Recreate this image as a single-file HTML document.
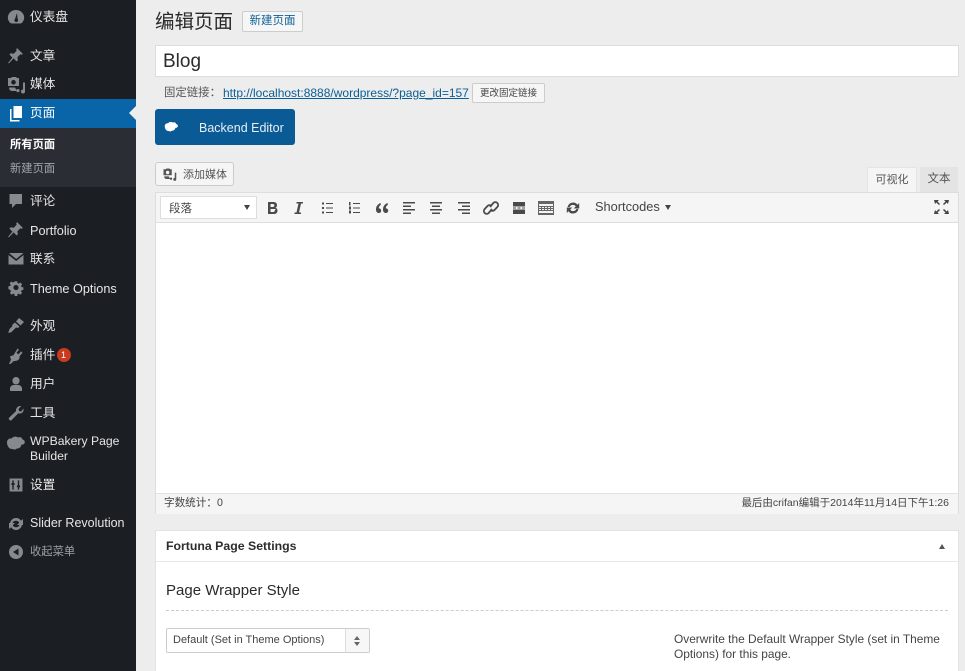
<!DOCTYPE html>
<html lang="zh"><head><meta charset="utf-8"><title>编辑页面</title>
<style>
html,body{margin:0;padding:0;width:965px;height:671px;overflow:hidden;background:#ededed}
body{font-family:"Liberation Sans","Noto Sans CJK SC",sans-serif;color:#333;position:relative}
#w{position:absolute;left:0;top:0;width:965px;height:671px;filter:blur(.35px)}
.a{position:absolute;white-space:nowrap}
#side{position:absolute;left:0;top:0;width:136px;height:671px;background:#1b1e23}
.m{position:absolute;left:30px;font-size:12.7px;line-height:18px;color:#e6e6e6;white-space:nowrap}
.i{position:absolute;left:6px;width:20px;height:20px;fill:#868a8f}
.t{position:absolute;top:199px;width:22px;height:18px;fill:#4a4a4a}
.t path.s{fill:none;stroke:#4a4a4a;stroke-width:1.8}
</style></head><body><div id="w">
<div id="side">
<div class="a" style="left:0;top:99px;width:136px;height:29px;background:#0a65a8"></div>
<div class="a" style="left:129px;top:106px;border:7.5px solid transparent;border-right-color:#ededed;border-left:0"></div>
<div class="a" style="left:0;top:128px;width:136px;height:59px;background:#2a2d33"></div>

<svg class="i" style="top:7px" viewBox="0 0 20 20"><path fill-rule="evenodd" d="M10 3a8 7.600 0 0 0-7 11.500c1 1.600 2 2 3 2h8c1 0 2-.4 3-2A8 7.600 0 0 0 10 3zM9 12l2-6 .6 6a1.800 1.800 0 1 1-2.600 0z"/></svg>
<div class="m" style="top:8px">仪表盘</div>
<svg class="i" style="top:45px" viewBox="0 0 20 20"><path d="M11 3l6 6-1.600.8-1-.6-3 3 .5 3-1.400 1.200-2.900-3-4.600 4.800-1-.2 4.400-5.400-3-3 1.300-1.300 3 .5 3-3-.5-1z"/></svg>
<div class="m" style="top:47px">文章</div>
<svg class="i" style="top:75px" viewBox="0 0 20 20"><path fill-rule="evenodd" d="M2 3h3l1-1h4l1 1h2v8H2zM7.500 5a2.300 2.300 0 1 0 0 4.600 2.300 2.300 0 0 0 0-4.600zM3 12.500h6l2 3.500H6a3 3 0 0 1-3-3z"/><path d="M17 7.500h2v9a2 2 0 1 1-2-2zM12 14a1.600 1.600 0 1 1 0 3.200 1.600 1.600 0 0 1 0-3.200z"/></svg>
<div class="m" style="top:75px">媒体</div>
<svg class="i" style="top:103px;fill:#fff" viewBox="0 0 20 20"><path d="M7.500 3h8.500v12H7.500z"/><path d="M5.500 6v11h8v1.500H4V6z"/></svg>
<div class="m" style="top:104px;color:#fff">页面</div>
<div class="a" style="left:10px;top:136px;font-size:11.300px;line-height:18px;font-weight:700;color:#fff">所有页面</div>
<div class="a" style="left:10px;top:160px;font-size:11.300px;line-height:18px;color:#a4a7ab">新建页面</div>
<svg class="i" style="top:191px" viewBox="0 0 20 20"><path d="M3.500 3h12.500v10h-6l-4 4v-4H3.500z"/></svg>
<div class="m" style="top:192px">评论</div>
<svg class="i" style="top:219px" viewBox="0 0 20 20"><path d="M11 3l6 6-1.600.8-1-.6-3 3 .5 3-1.400 1.200-2.900-3-4.600 4.800-1-.2 4.400-5.400-3-3 1.300-1.300 3 .5 3-3-.5-1z"/></svg>
<div class="m" style="top:222px">Portfolio</div>
<svg class="i" style="top:249px" viewBox="0 0 20 20"><path d="M3 4h14.500L10.200 10zM2.500 6l7.700 6 7.300-6v9.500h-15z"/></svg>
<div class="m" style="top:250px">联系</div>
<svg class="i" style="top:278px;transform:scale(.85)" viewBox="0 0 20 20"><path fill-rule="evenodd" d="M8.500 2.500h3l.4 2.200 1.300.6 1.900-1.300 2.100 2.100-1.300 1.900.6 1.300 2.200.4v3l-2.200.4-.6 1.300 1.300 1.900-2.100 2.100-1.900-1.300-1.300.6-.4 2.200h-3l-.4-2.200-1.300-.6-1.900 1.300-2.100-2.100 1.300-1.900-.6-1.300L1 11.500v-3l2.200-.4.600-1.300-1.300-1.900 2.100-2.100 1.900 1.300 1.300-.6zM10 7a3 3 0 1 0 0 6 3 3 0 0 0 0-6z" transform="translate(0 -.5)"/></svg>
<div class="m" style="top:280px">Theme Options</div>
<svg class="i" style="top:315px" viewBox="0 0 20 20"><path d="M13 3l5 4-3.500 3.500-4.500-4zM9 7.500l4.500 4-1.500 1.500-2-.5-4.500 4.500c-1 .8-3 .8-3.500.5 1-1 1.200-2.500 1.500-3.500l3-3L6 10z"/></svg>
<div class="m" style="top:317px">外观</div>
<svg class="i" style="top:345px" viewBox="0 0 20 20"><path d="M13 3.500l1.500 1.200-2.500 3 2 1.700 2.500-3 1.500 1.300-3 3.500c.7 2-1 4-3 4.500l-3 .5-3 2.800-1.500-.1 2-4.200-1-3.500 3.500-1z" transform="translate(-1.500 0)"/></svg>
<div class="m" style="top:346px">插件</div>
<div class="a" style="left:56.500px;top:348px;width:14px;height:14px;border-radius:7px;background:#ca3a1e;color:#fff;font-size:9px;line-height:14px;text-align:center">1</div>
<svg class="i" style="top:374px" viewBox="0 0 20 20"><path d="M10 3a3.500 3.500 0 0 1 3.500 4c0 2-1.500 3.500-3.500 3.500S6.500 9 6.500 7A3.500 3.500 0 0 1 10 3zM4 17v-2.500c0-2 2-3.500 3.500-3.500h5c1.500 0 3.500 1.500 3.500 3.500V17z"/></svg>
<div class="m" style="top:375px">用户</div>
<svg class="i" style="top:403px" viewBox="0 0 20 20"><path d="M17.500 5.500c.6 2.500-1 5-3.500 5-.6 0-1.200 0-1.700-.3l-6.800 7c-1 1-3.500-1-2.500-2.500l7.100-6.700c-.6-2.800 1.900-5.500 5.200-5L12.500 6l.6 2 2 .5z"/></svg>
<div class="m" style="top:404px">工具</div>
<svg class="a" style="left:6px;top:436px" width="19" height="15" viewBox="0 0 19 15"><path fill="#868a8f" d="M1 6.500C1 3.500 3.500 2 5.500 2.500 7 .5 10 0 12 1.500c2-1 4 0 4.500 2 1.500.3 2.500 1.500 2.300 3-.3 1.500-2 2.500-3.300 2-.5 2.500-2 4-4.500 4-1 1-3 1.500-4.500.5-3 .5-5.500-3-5.500-6.500z"/></svg>
<div class="m" style="top:434px;line-height:15px;white-space:normal;width:100px;font-size:12.200px">WPBakery Page Builder</div>
<svg class="i" style="top:475px;transform:scale(.92)" viewBox="0 0 20 20"><path fill-rule="evenodd" d="M3 3h14v14H3zM6 5v3H5v2h1v5h1.500v-5h1V8h-1V5zm6 0v5.500h-1v2h1V15h1.500v-2.500h1v-2h-1V5z"/></svg>
<div class="m" style="top:476px">设置</div>
<svg class="i" style="top:514px" viewBox="0 0 20 20"><path d="M10 4a6 6 0 0 1 5 2.700L17 5v6h-6l2.300-2.300A3.800 3.800 0 0 0 6.300 9.500H4A6 6 0 0 1 10 4zM3 15v-6h6l-2.300 2.300a3.800 3.800 0 0 0 7-.8H16A6 6 0 0 1 5 13.300z"/></svg>
<div class="m" style="top:514px;font-size:12.500px">Slider Revolution</div>
<svg class="i" style="top:542px" viewBox="0 0 20 20"><path fill-rule="evenodd" d="M10 3a7 7 0 1 1 0 14 7 7 0 0 1 0-14zM12.500 6.500L7 10l5.500 3.500z"/></svg>
<div class="m" style="top:543px;color:#9ea1a5;font-size:11.300px">收起菜单</div>
</div>

<div class="a" style="left:155px;top:8px;font-size:19.500px;line-height:28px;color:#2a2a2a">编辑页面</div>
<div class="a" style="left:242px;top:11px;width:59px;height:19px;border:1px solid #ccc;border-radius:2px;background:#f6f6f6;color:#0a5f96;font-size:11.500px;line-height:19px;text-align:center">新建页面</div>
<div class="a" style="left:155px;top:45px;width:802px;height:30px;border:1px solid #ddd;background:#fff;font-size:19px;line-height:32px;color:#2c2c2c"><span style="margin-left:7px">Blog</span></div>
<div class="a" style="left:164px;top:84px;font-size:11.400px;line-height:18px;color:#555">固定链接：</div>
<div class="a" style="left:223px;top:84px;font-size:12px;line-height:18px;color:#0a5f96;text-decoration:underline">http://localhost:8888/wordpress/?page_id=157</div>
<div class="a" style="left:472px;top:83px;width:71px;height:18px;border:1px solid #ccc;border-radius:2px;background:#f6f6f6;color:#444;font-size:9.500px;line-height:20px;text-align:center">更改固定链接</div>
<div class="a" style="left:155px;top:109px;width:140px;height:36px;border-radius:3px;background:#0a5a96"></div>
<svg class="a" style="left:164px;top:121px" width="14" height="12" viewBox="0 0 19 15"><path fill="#fff" d="M1 6.500C1 3.500 3.500 2 5.500 2.500 7 .5 10 0 12 1.500c2-1 4 0 4.500 2 1.500.3 2.500 1.500 2.300 3-.3 1.500-2 2.500-3.300 2-.5 2.500-2 4-4.500 4-1 1-3 1.500-4.500.5-3 .5-5.500-3-5.500-6.500z"/></svg>
<div class="a" style="left:199px;top:119px;font-size:12.500px;line-height:18px;color:#e8eff5">Backend Editor</div>

<div class="a" style="left:155px;top:162px;width:77px;height:22px;border:1px solid #ccc;border-radius:3px;background:#f5f5f5"></div>
<svg class="a" style="left:162px;top:167px" width="15" height="15" viewBox="0 0 20 20"><path fill="#555" fill-rule="evenodd" d="M2 3h3l1-1h4l1 1h2v8H2zM7.500 5a2.300 2.300 0 1 0 0 4.600 2.300 2.300 0 0 0 0-4.600zM3 12.500h6l2 3.500H6a3 3 0 0 1-3-3z"/><path fill="#555" d="M17 7.500h2v9a2 2 0 1 1-2-2zM12 14a1.600 1.600 0 1 1 0 3.200 1.600 1.600 0 0 1 0-3.200z"/></svg>
<div class="a" style="left:183px;top:166px;font-size:11px;line-height:18px;color:#555">添加媒体</div>
<div class="a" style="left:867px;top:167px;width:48px;height:25px;background:#f5f5f5;border:1px solid #e4e4e4;border-bottom:0;color:#555;font-size:11px;line-height:25px;text-align:center">可视化</div>
<div class="a" style="left:920px;top:167px;width:38px;height:25px;background:#e4e4e4;color:#555;font-size:11.500px;line-height:25px;text-align:center">文本</div>

<div class="a" style="left:155px;top:192px;width:802px;height:320px;border:1px solid #ddd;background:#fff"></div>
<div class="a" style="left:156px;top:193px;width:802px;height:29px;background:#f5f5f5;border-bottom:1px solid #ddd"></div>
<div class="a" style="left:160px;top:196px;width:95px;height:21px;border:1px solid #ddd;background:#fff;font-size:11.500px;line-height:25px;color:#444"><span style="margin-left:8px">段落</span></div>
<div class="a" style="left:244px;top:205px;border:3.500px solid transparent;border-top:5px solid #444;border-bottom:0"></div>

<svg class="t" style="left:261px" viewBox="0 0 22 18"><path d="M7 3h5c2.500 0 4 1 4 3.200 0 1.300-.7 2.200-1.600 2.600 1.300.4 2.100 1.400 2.100 2.900 0 2.300-1.700 3.300-4 3.300H7zm2.500 2v3h2.300c1 0 1.600-.5 1.600-1.500S12.800 5 11.800 5zm0 5v3h2.500c1.200 0 1.800-.5 1.800-1.500S15.500 10 14.300 10z" fill-rule="evenodd"/></svg>
<svg class="t" style="left:288px" viewBox="0 0 22 18"><path d="M8.500 3H15v1.500h-2L11 13.500h2V15H6.500v-1.500h2l2-9h-2z"/></svg>
<svg class="t" style="left:316px" viewBox="0 0 22 18"><path d="M6 3.500h2v2H6zM6 8h2v2H6zM6 12.500h2v2H6zM10 4h7v1h-7zM10 8.500h7v1h-7zM10 13h7v1h-7z"/></svg>
<svg class="t" style="left:343px" viewBox="0 0 22 18"><path d="M6 3h1.500v3.500H6zM6 7.500h2v3H6zM6 11.500h2v3H6zM10 4h7v1h-7zM10 8.500h7v1h-7zM10 13h7v1h-7z"/></svg>
<svg class="t" style="left:371px" viewBox="0 0 22 18"><path d="M9.500 4C7 5 5 7 5 10.500 5 12.500 6 14 7.800 14c1.500 0 2.400-1 2.400-2.300 0-1.400-1-2.300-2.300-2.300-.3-1.500.6-2.800 2-3.700zM16.500 4c-2.500 1-4.500 3-4.500 6.500 0 2 1 3.500 2.800 3.500 1.500 0 2.400-1 2.400-2.300 0-1.400-1-2.300-2.300-2.300-.3-1.500.6-2.800 2-3.700z"/></svg>
<svg class="t" style="left:398px" viewBox="0 0 22 18"><path d="M5 3h12v1.500H5zM5 6.500h8V8H5zM5 10h12v1.500H5zM5 13.500h8V15H5z"/></svg>
<svg class="t" style="left:425px" viewBox="0 0 22 18"><path d="M5 3h12v1.500H5zM7 6.500h8V8H7zM5 10h12v1.500H5zM7 13.500h8V15H7z"/></svg>
<svg class="t" style="left:453px" viewBox="0 0 22 18"><path d="M5 3h12v1.500H5zM9 6.500h8V8H9zM5 10h12v1.500H5zM9 13.500h8V15H9z"/></svg>
<svg class="t" style="left:480px" viewBox="0 0 22 18"><path class="s" d="M10 8l3.300-4a2.800 2.800 0 0 1 4 4l-2.800 3a2.800 2.800 0 0 1-4 0M12 10l-3.300 4a2.800 2.800 0 0 1-4-4l2.800-3a2.800 2.800 0 0 1 4 0"/></svg>
<svg class="t" style="left:508px" viewBox="0 0 22 18"><path d="M5 3h12v4.500H5zM5 8.500h3v1H5zM9.500 8.500h3v1h-3zM14 8.500h3v1h-3zM5 10.500h12V15H5z"/></svg>
<svg class="t" style="left:535px" viewBox="0 0 22 18"><path fill="#666" fill-rule="evenodd" d="M3 2h16v14H3zM4 5v2h14V5zM4 8v1h2V8zm3 0v1h2V8zm3 0v1h2V8zm3 0v1h2V8zm3 0v1h2V8zM4 10v1h2v-1zm3 0v1h2v-1zm3 0v1h2v-1zm3 0v1h2v-1zm3 0v1h2v-1zM4 12v2h14v-2z"/></svg>
<svg class="t" style="left:562px" viewBox="0 0 22 18"><path d="M11 3.500a5.500 5.500 0 0 1 4.500 2.300L17.200 4v5.500h-5.500l2.100-2.100A3.500 3.500 0 0 0 7.700 8H5.600A5.500 5.500 0 0 1 11 3.500zM4.800 14V8.500h5.500L8.200 10.600a3.500 3.500 0 0 0 6.100-.6h2.100a5.500 5.500 0 0 1-9.900 2.200z"/></svg>
<div class="a" style="left:595px;top:198px;font-size:12.800px;line-height:18px;color:#444">Shortcodes</div>
<div class="a" style="left:665px;top:205px;border:3.500px solid transparent;border-top:5px solid #444;border-bottom:0"></div>
<svg class="a" style="left:934px;top:200px" width="15" height="14" viewBox="0 0 15 14"><path fill="#444" d="M0 0h5L3.500 1.500 6 4 5 5 2.300 2.500 1 4zM15 0h-5l1.500 1.500L9 4l1 1 2.700-2.500L14 4zM0 14h5l-1.500-1.500L6 10 5 9l-2.700 2.500L1 10zM15 14h-5l1.500-1.500L9 10l1-1 2.700 2.500L14 10z"/></svg>

<div class="a" style="left:156px;top:493px;width:802px;height:20px;background:#f5f5f5;border-top:1px solid #e2e2e2"></div>
<div class="a" style="left:164px;top:494px;font-size:10.600px;line-height:18px;color:#444">字数统计：0</div>
<div class="a" style="right:16px;top:494px;font-size:10.500px;line-height:18px;color:#444">最后由crifan编辑于2014年11月14日下午1:26</div>

<div class="a" style="left:155px;top:530px;width:802px;height:141px;border:1px solid #e2e2e2;border-bottom:0;background:#fff"></div>
<div class="a" style="left:156px;top:561px;width:802px;height:1px;background:#e8e8e8"></div>
<div class="a" style="left:166px;top:537px;font-size:12.300px;line-height:18px;font-weight:700;color:#2c2c2c">Fortuna Page Settings</div>
<div class="a" style="left:939px;top:544px;border:3.500px solid transparent;border-bottom:5px solid #555;border-top:0"></div>
<div class="a" style="left:166px;top:580px;font-size:15px;line-height:22px;color:#2a2a2a">Page Wrapper Style</div>
<div class="a" style="left:166px;top:610px;width:782px;height:0;border-top:1px dashed #ccc"></div>
<div class="a" style="left:166px;top:628px;width:202px;height:23px;border:1px solid #ccc;border-radius:2px;background:#fff"></div>
<div class="a" style="left:345px;top:629px;width:23px;height:23px;border-left:1px solid #ddd;background:#f7f7f7"></div>
<div class="a" style="left:354px;top:636px;border:3.500px solid transparent;border-bottom:4px solid #666;border-top:0"></div>
<div class="a" style="left:354px;top:642px;border:3.500px solid transparent;border-top:4px solid #666;border-bottom:0"></div>
<div class="a" style="left:173px;top:632px;font-size:11px;line-height:16px;color:#444">Default (Set in Theme Options)</div>
<div class="a" style="left:674px;top:632px;width:275px;font-size:11.900px;line-height:15px;color:#444;white-space:normal">Overwrite the Default Wrapper Style (set in Theme Options) for this page.</div>
</div></body></html>
